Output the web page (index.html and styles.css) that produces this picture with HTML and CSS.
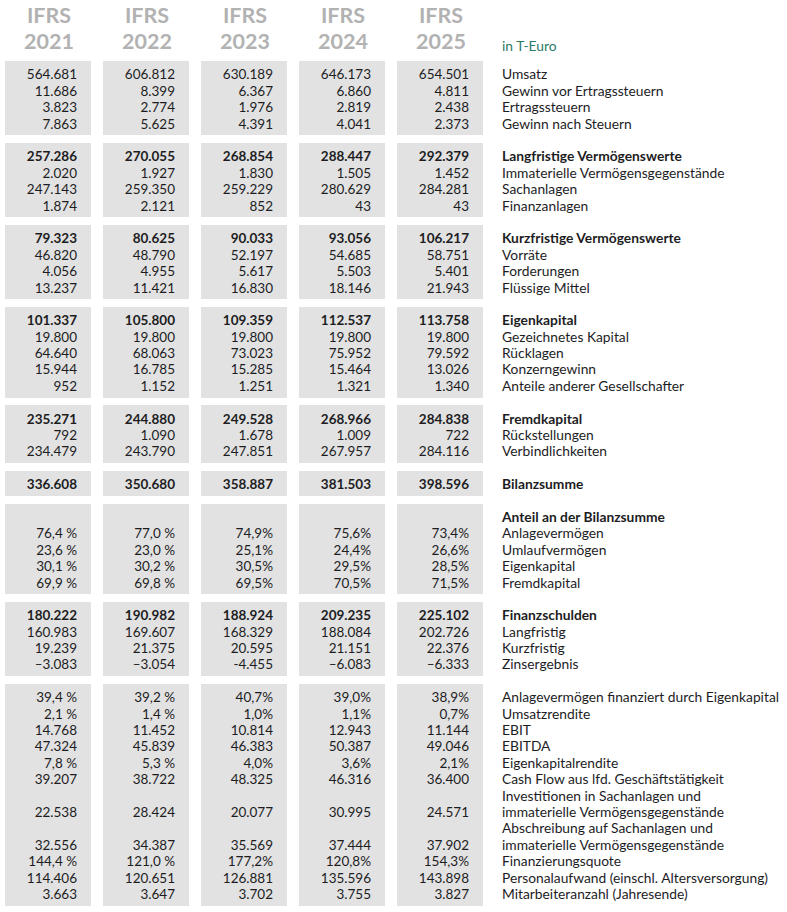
FILE: index.html
```html
<!DOCTYPE html>
<html lang="de">
<head>
<meta charset="utf-8">
<title>IFRS Kennzahlen</title>
<link rel="stylesheet" href="styles.css">
</head>
<body>
<div class="page">
  <div class="head">
    <div class="yr"><div>IFRS</div><div>2021</div></div>
    <div class="yr"><div>IFRS</div><div>2022</div></div>
    <div class="yr"><div>IFRS</div><div>2023</div></div>
    <div class="yr"><div>IFRS</div><div>2024</div></div>
    <div class="yr"><div>IFRS</div><div>2025</div></div>
    <div class="unit">in T-Euro</div>
  </div>

  <div class="grp">
    <div class="col"><div>564.681</div><div>11.686</div><div>3.823</div><div>7.863</div></div>
    <div class="col"><div>606.812</div><div>8.399</div><div>2.774</div><div>5.625</div></div>
    <div class="col"><div>630.189</div><div>6.367</div><div>1.976</div><div>4.391</div></div>
    <div class="col"><div>646.173</div><div>6.860</div><div>2.819</div><div>4.041</div></div>
    <div class="col"><div>654.501</div><div>4.811</div><div>2.438</div><div>2.373</div></div>
    <div class="labels"><div>Umsatz</div><div>Gewinn vor Ertragssteuern</div><div>Ertragssteuern</div><div>Gewinn nach Steuern</div></div>
  </div>

  <div class="grp">
    <div class="col"><div class="b">257.286</div><div>2.020</div><div>247.143</div><div>1.874</div></div>
    <div class="col"><div class="b">270.055</div><div>1.927</div><div>259.350</div><div>2.121</div></div>
    <div class="col"><div class="b">268.854</div><div>1.830</div><div>259.229</div><div>852</div></div>
    <div class="col"><div class="b">288.447</div><div>1.505</div><div>280.629</div><div>43</div></div>
    <div class="col"><div class="b">292.379</div><div>1.452</div><div>284.281</div><div>43</div></div>
    <div class="labels"><div class="b">Langfristige Vermögenswerte</div><div>Immaterielle Vermögensgegenstände</div><div>Sachanlagen</div><div>Finanzanlagen</div></div>
  </div>

  <div class="grp">
    <div class="col"><div class="b">79.323</div><div>46.820</div><div>4.056</div><div>13.237</div></div>
    <div class="col"><div class="b">80.625</div><div>48.790</div><div>4.955</div><div>11.421</div></div>
    <div class="col"><div class="b">90.033</div><div>52.197</div><div>5.617</div><div>16.830</div></div>
    <div class="col"><div class="b">93.056</div><div>54.685</div><div>5.503</div><div>18.146</div></div>
    <div class="col"><div class="b">106.217</div><div>58.751</div><div>5.401</div><div>21.943</div></div>
    <div class="labels"><div class="b">Kurzfristige Vermögenswerte</div><div>Vorräte</div><div>Forderungen</div><div>Flüssige Mittel</div></div>
  </div>

  <div class="grp">
    <div class="col"><div class="b">101.337</div><div>19.800</div><div>64.640</div><div>15.944</div><div>952</div></div>
    <div class="col"><div class="b">105.800</div><div>19.800</div><div>68.063</div><div>16.785</div><div>1.152</div></div>
    <div class="col"><div class="b">109.359</div><div>19.800</div><div>73.023</div><div>15.285</div><div>1.251</div></div>
    <div class="col"><div class="b">112.537</div><div>19.800</div><div>75.952</div><div>15.464</div><div>1.321</div></div>
    <div class="col"><div class="b">113.758</div><div>19.800</div><div>79.592</div><div>13.026</div><div>1.340</div></div>
    <div class="labels"><div class="b">Eigenkapital</div><div>Gezeichnetes Kapital</div><div>Rücklagen</div><div>Konzerngewinn</div><div>Anteile anderer Gesellschafter</div></div>
  </div>

  <div class="grp">
    <div class="col"><div class="b">235.271</div><div>792</div><div>234.479</div></div>
    <div class="col"><div class="b">244.880</div><div>1.090</div><div>243.790</div></div>
    <div class="col"><div class="b">249.528</div><div>1.678</div><div>247.851</div></div>
    <div class="col"><div class="b">268.966</div><div>1.009</div><div>267.957</div></div>
    <div class="col"><div class="b">284.838</div><div>722</div><div>284.116</div></div>
    <div class="labels"><div class="b">Fremdkapital</div><div>Rückstellungen</div><div>Verbindlichkeiten</div></div>
  </div>

  <div class="grp">
    <div class="col"><div class="b">336.608</div></div>
    <div class="col"><div class="b">350.680</div></div>
    <div class="col"><div class="b">358.887</div></div>
    <div class="col"><div class="b">381.503</div></div>
    <div class="col"><div class="b">398.596</div></div>
    <div class="labels"><div class="b">Bilanzsumme</div></div>
  </div>

  <div class="grp">
    <div class="col"><div>&nbsp;</div><div>76,4 %</div><div>23,6 %</div><div>30,1 %</div><div>69,9 %</div></div>
    <div class="col"><div>&nbsp;</div><div>77,0 %</div><div>23,0 %</div><div>30,2 %</div><div>69,8 %</div></div>
    <div class="col"><div>&nbsp;</div><div>74,9%</div><div>25,1%</div><div>30,5%</div><div>69,5%</div></div>
    <div class="col"><div>&nbsp;</div><div>75,6%</div><div>24,4%</div><div>29,5%</div><div>70,5%</div></div>
    <div class="col"><div>&nbsp;</div><div>73,4%</div><div>26,6%</div><div>28,5%</div><div>71,5%</div></div>
    <div class="labels"><div class="b">Anteil an der Bilanzsumme</div><div>Anlagevermögen</div><div>Umlaufvermögen</div><div>Eigenkapital</div><div>Fremdkapital</div></div>
  </div>

  <div class="grp">
    <div class="col"><div class="b">180.222</div><div>160.983</div><div>19.239</div><div>–3.083</div></div>
    <div class="col"><div class="b">190.982</div><div>169.607</div><div>21.375</div><div>–3.054</div></div>
    <div class="col"><div class="b">188.924</div><div>168.329</div><div>20.595</div><div>-4.455</div></div>
    <div class="col"><div class="b">209.235</div><div>188.084</div><div>21.151</div><div>–6.083</div></div>
    <div class="col"><div class="b">225.102</div><div>202.726</div><div>22.376</div><div>–6.333</div></div>
    <div class="labels"><div class="b">Finanzschulden</div><div>Langfristig</div><div>Kurzfristig</div><div>Zinsergebnis</div></div>
  </div>

  <div class="grp">
    <div class="col"><div>39,4 %</div><div>2,1 %</div><div>14.768</div><div>47.324</div><div>7,8 %</div><div>39.207</div><div>&nbsp;</div><div>22.538</div><div>&nbsp;</div><div>32.556</div><div>144,4 %</div><div>114.406</div><div>3.663</div></div>
    <div class="col"><div>39,2 %</div><div>1,4 %</div><div>11.452</div><div>45.839</div><div>5,3 %</div><div>38.722</div><div>&nbsp;</div><div>28.424</div><div>&nbsp;</div><div>34.387</div><div>121,0 %</div><div>120.651</div><div>3.647</div></div>
    <div class="col"><div>40,7%</div><div>1,0%</div><div>10.814</div><div>46.383</div><div>4,0%</div><div>48.325</div><div>&nbsp;</div><div>20.077</div><div>&nbsp;</div><div>35.569</div><div>177,2%</div><div>126.881</div><div>3.702</div></div>
    <div class="col"><div>39,0%</div><div>1,1%</div><div>12.943</div><div>50.387</div><div>3,6%</div><div>46.316</div><div>&nbsp;</div><div>30.995</div><div>&nbsp;</div><div>37.444</div><div>120,8%</div><div>135.596</div><div>3.755</div></div>
    <div class="col"><div>38,9%</div><div>0,7%</div><div>11.144</div><div>49.046</div><div>2,1%</div><div>36.400</div><div>&nbsp;</div><div>24.571</div><div>&nbsp;</div><div>37.902</div><div>154,3%</div><div>143.898</div><div>3.827</div></div>
    <div class="labels"><div>Anlagevermögen finanziert durch Eigenkapital</div><div>Umsatzrendite</div><div>EBIT</div><div>EBITDA</div><div>Eigenkapitalrendite</div><div>Cash Flow aus lfd. Geschäftstätigkeit</div><div>Investitionen in Sachanlagen und</div><div>immaterielle Vermögensgegenstände</div><div>Abschreibung auf Sachanlagen und</div><div>immaterielle Vermögensgegenstände</div><div>Finanzierungsquote</div><div>Personalaufwand (einschl. Altersversorgung)</div><div>Mitarbeiteranzahl (Jahresende)</div></div>
  </div>
</div>
</body>
</html>
```
FILE: styles.css
```css
html, body {
  margin: 0;
  padding: 0;
  background: #ffffff;
}

.page {
  padding: 3px 0 0 5px;
  font-family: Lato, "Open Sans", sans-serif;
  font-size: 13.8px;
  color: #1d1d1f;
}

.head,
.grp {
  display: grid;
  grid-template-columns: repeat(5, 86px) auto;
  column-gap: 12px;
}

.head {
  align-items: end;
  margin-bottom: 6.5px;
}

.yr {
  text-align: center;
  font-weight: 700;
  font-size: 21.5px;
  line-height: 25.8px;
  color: #b2b2b2;
  padding-left: 2px;
}

.unit {
  padding-left: 7px;
  color: #2a7a66;
  line-height: 16.4px;
  padding-bottom: 0.5px;
}

.grp {
  margin-bottom: 7.7px;
}

.col {
  background: #e2e2e2;
  padding: 5.4px 14px 3.3px 0;
  text-align: right;
  font-size: 13.5px;
}

.labels {
  padding: 5.4px 0 3.3px 7px;
  white-space: nowrap;
}

.col > div,
.labels > div {
  height: 16.4px;
  line-height: 16.4px;
}

.b {
  font-weight: 700;
}
```
